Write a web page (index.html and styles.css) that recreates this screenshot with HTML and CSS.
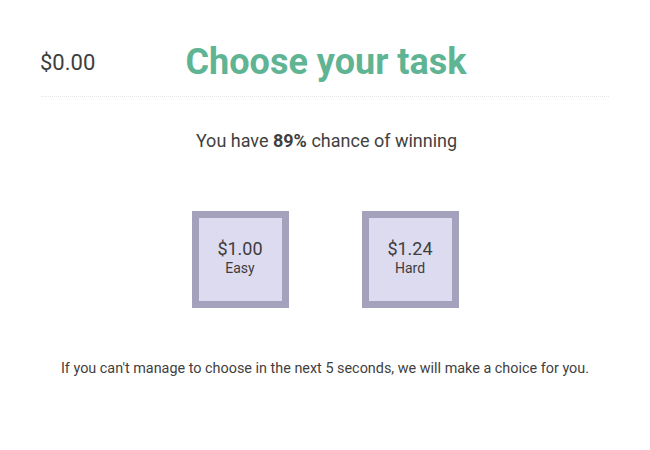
FILE: index.html
```html
<!DOCTYPE html>
<html>
<head>
<meta charset="utf-8">
<link rel="stylesheet" href="styles.css">
</head>
<body>
<div class="page">
  <header class="header">
    <div class="balance">$0.00</div>
    <h1 class="title">Choose your task</h1>
    <div></div>
  </header>
  <p class="chance">You have <b>89%</b> chance of winning</p>
  <div class="tasks">
    <div class="task"><span class="price">$1.00</span><span class="level">Easy</span></div>
    <div class="task"><span class="price">$1.24</span><span class="level">Hard</span></div>
  </div>
  <p class="note">If you can't manage to choose in the next 5 seconds, we will make a choice for you.</p>
</div>
</body>
</html>
```
FILE: styles.css
```css
html, body { margin: 0; padding: 0; background: #fff; }
body { font-family: Roboto, "Liberation Sans", sans-serif; color: #444; }
.page { width: 568px; margin: 0 auto; padding-top: 39px; }
.header {
  display: grid;
  grid-template-columns: 1fr auto 1fr;
  align-items: center;
  height: 46px;
  padding-bottom: 11px;
  border-bottom: 1px dotted #e6e6e6;
}
.balance { font-size: 22px; color: #3d3d3d; margin-left: -1px; }
.title { margin: 0 0 0 2px; font-size: 36px; font-weight: 700; color: #5fb494; line-height: 46px; }
.chance { margin: 32px 0 0 3px; text-align: center; font-size: 18px; line-height: 24px; color: #3f3f3f; }
.chance b { font-weight: 700; }
.tasks { display: flex; justify-content: center; gap: 73px; margin-top: 58px; }
.task {
  width: 83px; height: 79px;
  padding-bottom: 4px;
  border: 7px solid #a3a1bb;
  background: #dddbef;
  display: flex; flex-direction: column; align-items: center; justify-content: center;
}
.price { font-size: 18px; line-height: 20px; color: #3d3d3d; }
.level { font-size: 14px; line-height: 18px; color: #3d3d3d; }
.note { margin: 52px 0 0; text-align: center; font-size: 14.4px; color: #3f3f3f; }
```
